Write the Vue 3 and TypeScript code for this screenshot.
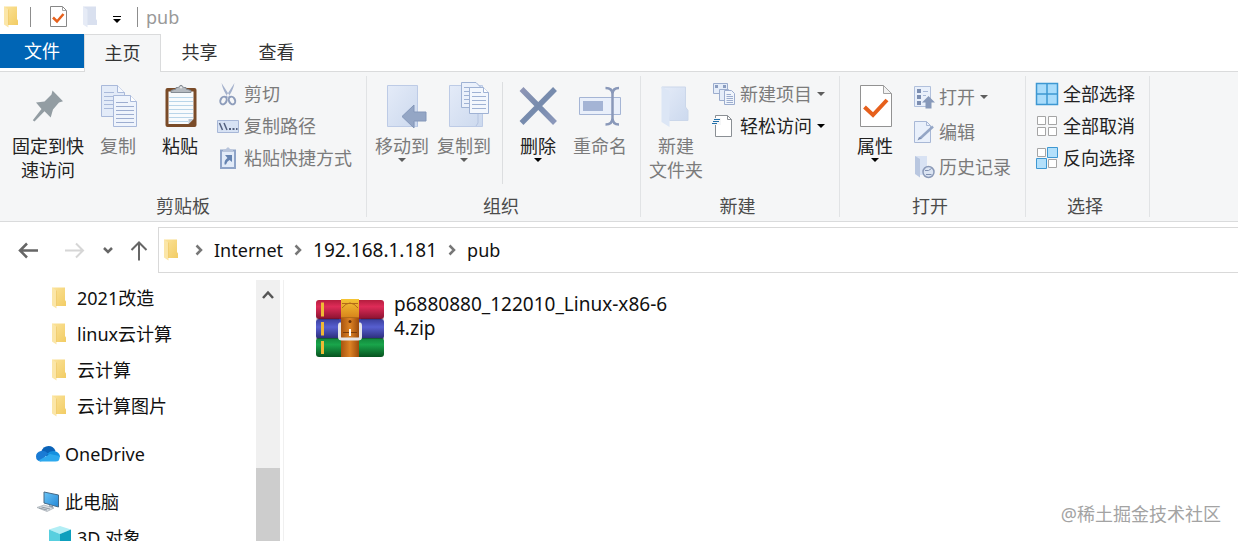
<script setup lang="ts">
interface LargeAction { icon: string; lines: string[]; disabled?: boolean; menu?: boolean; wide?: boolean; divider?: boolean }
interface SmallAction { icon: string; label: string; disabled?: boolean; menu?: boolean }
interface Group { title: string; large: LargeAction[]; small: SmallAction[]; roomy?: boolean }
interface Place { icon: string; label: string; level: number; spaced?: boolean }

const groups: Group[] = [
  {
    title: '剪贴板',
    large: [
      { icon: 'pin', lines: ['固定到快', '速访问'], wide: true },
      { icon: 'copy', lines: ['复制'], disabled: true },
      { icon: 'paste', lines: ['粘贴'] },
    ],
    small: [
      { icon: 'cut', label: '剪切', disabled: true },
      { icon: 'path', label: '复制路径', disabled: true },
      { icon: 'shortcut', label: '粘贴快捷方式', disabled: true },
    ],
  },
  {
    title: '组织',
    large: [
      { icon: 'move', lines: ['移动到'], disabled: true, menu: true },
      { icon: 'copyto', lines: ['复制到'], disabled: true, menu: true },
      { icon: 'delete', lines: ['删除'], menu: true, divider: true },
      { icon: 'rename', lines: ['重命名'], disabled: true },
    ],
    small: [],
  },
  {
    title: '新建',
    large: [{ icon: 'newfolder', lines: ['新建', '文件夹'], disabled: true }],
    small: [
      { icon: 'newitem', label: '新建项目', disabled: true, menu: true },
      { icon: 'easy', label: '轻松访问', menu: true },
    ],
  },
  {
    title: '打开',
    roomy: true,
    large: [{ icon: 'props', lines: ['属性'], menu: true }],
    small: [
      { icon: 'open', label: '打开', disabled: true, menu: true },
      { icon: 'edit', label: '编辑', disabled: true },
      { icon: 'history', label: '历史记录', disabled: true },
    ],
  },
  {
    title: '选择',
    large: [],
    small: [
      { icon: 'all', label: '全部选择' },
      { icon: 'none', label: '全部取消' },
      { icon: 'invert', label: '反向选择' },
    ],
  },
]

const places: Place[] = [
  { icon: 'folder', label: '2021改造', level: 2 },
  { icon: 'folder', label: 'linux云计算', level: 2 },
  { icon: 'folder', label: '云计算', level: 2 },
  { icon: 'folder', label: '云计算图片', level: 2 },
  { icon: 'onedrive', label: 'OneDrive', level: 1, spaced: true },
  { icon: 'pc', label: '此电脑', level: 1, spaced: true },
  { icon: 'cube', label: '3D 对象', level: 2 },
]

const crumbs: string[] = ['Internet', '192.168.1.181', 'pub']
const isAddress = (name: string): boolean => /^[\d.]+$/.test(name)
</script>

<template>
  <div class="window">
    <svg class="sprite" aria-hidden="true">
      <defs>
        <linearGradient id="g-folder" x1="0" y1="0" x2="1" y2="1"><stop offset="0" stop-color="#fbe39b" /><stop offset="1" stop-color="#f2cc63" /></linearGradient>
        <linearGradient id="g-pale" x1="0" y1="0" x2="1" y2="1"><stop offset="0" stop-color="#e4ebf8" /><stop offset="1" stop-color="#ccd9ee" /></linearGradient>
        <linearGradient id="g-x" x1="0" y1="0" x2="1" y2="1"><stop offset="0" stop-color="#8f96b6" /><stop offset=".5" stop-color="#768bad" /><stop offset="1" stop-color="#8c98bb" /></linearGradient>
        <linearGradient id="g-red" x1="0" y1="0" x2="0" y2="1"><stop offset="0" stop-color="#b51d3e" /><stop offset=".35" stop-color="#de2c58" /><stop offset="1" stop-color="#8a1230" /></linearGradient>
        <linearGradient id="g-blue" x1="0" y1="0" x2="0" y2="1"><stop offset="0" stop-color="#3a3f9c" /><stop offset=".4" stop-color="#575fd0" /><stop offset="1" stop-color="#2a2c77" /></linearGradient>
        <linearGradient id="g-green" x1="0" y1="0" x2="0" y2="1"><stop offset="0" stop-color="#12853a" /><stop offset=".35" stop-color="#19a54b" /><stop offset="1" stop-color="#07531f" /></linearGradient>
        <linearGradient id="g-belt" x1="0" y1="0" x2="1" y2="0"><stop offset="0" stop-color="#a85410" /><stop offset=".5" stop-color="#dd8324" /><stop offset="1" stop-color="#9b4a0c" /></linearGradient>
        <linearGradient id="g-gold" x1="0" y1="0" x2="0" y2="1"><stop offset="0" stop-color="#f5c535" /><stop offset="1" stop-color="#d9861c" /></linearGradient>
        <linearGradient id="g-screen" x1="0" y1="0" x2="1" y2="1"><stop offset="0" stop-color="#6cc5f6" /><stop offset="1" stop-color="#2387d6" /></linearGradient>

        <symbol id="i-pin" viewBox="0 0 48 48"><path fill="#939da3" d="M28.5 8.5 39 19.3 35 20.5 29 27.5 26.7 35.5 20.5 29.3 10.5 39.5 8.8 38.3 17.5 27 12 20.5 20.5 19.5 27.5 12.5Z" /></symbol>

        <symbol id="i-copy" viewBox="0 0 48 48">
          <g fill="#e3ebf8" stroke="#a9b9da"><path d="M7.500 3.500H23.500L30.500 10.500V34.500H7.500Z" /><path fill="#f5f8fd" d="M23.500 3.500V10.500H30.500" /><path d="M10 10.500H20M10 14.500H20M10 18.500H20M10 22.500H20M10 26.500H20" />
            <path fill="#eff4fc" d="M19.500 13.500H36.500L42.500 19.500V44.500H19.500Z" /><path fill="#fff" d="M36.500 13.500V19.500H42.500" /><path d="M22 20.500H34M22 24.500H40M22 28.500H40M22 32.500H40M22 36.500H40M22 40.500H40" stroke="#9dadd0" /></g>
        </symbol>

        <symbol id="i-paste" viewBox="0 0 48 48">
          <rect x="9.500" y="6" width="31" height="39" rx="2" fill="#7a4b28" /><path d="M12.500 9.500H37.500V37L32.500 42H12.500Z" fill="#f8fbfd" /><path d="M37.500 37H32.500V42Z" fill="#bcc8d3" />
          <path d="M13 15.500H37M13 19.500H37M13 23.500H37M13 27.500H37M13 31.500H37M13 35.500H37M13 39.500H32" stroke="#b9d5e9" />
          <path d="M15 10.500V8.500L20 7V5.500H22.500Q25 1 27.500 5.500H30V7L35 8.500V10.500Z" fill="#b5bac0" stroke="#858c94" /><circle cx="25" cy="5.500" r="1" fill="#eee" />
        </symbol>

        <symbol id="i-move" viewBox="0 0 48 48"><path fill="url(#g-pale)" stroke="#bdcbe6" d="M9.500 3.500H39.500V44.500H9.500Z" /><path d="M36 40V44.500M39.500 38V44.500" stroke="#afc0df" /><path fill="#94a6c5" stroke="#8497b9" d="M24 34.500 36 23V30H48V39H36V46Z" /></symbol>

        <symbol id="i-copyto" viewBox="0 0 48 48">
          <path fill="url(#g-pale)" stroke="#bdcbe6" d="M9.500 3.500H42.500V44.500H9.500Z" /><path d="M38 32V41L36 44" stroke="#b5c4e0" fill="none" />
          <g stroke="#9fb2d4" fill="#ebf1fb"><path d="M21.500.5H36L41.500 6V25.500H21.500Z" /><path d="M24 5.500H34M24 9.500H34M24 13.500H29M24 17.500H29M24 21.500H29" /><path fill="#f3f7fd" d="M29.500 5.500H43.500L48.500 10.500V31.500H29.500Z" /><path fill="#fff" d="M43.500 5.500V10.500H48.500" /><path d="M32 10.500H41M32 14.500H46M32 18.500H46M32 22.500H46M32 26.500H46" /></g>
        </symbol>

        <symbol id="i-delete" viewBox="0 0 48 48"><path d="M7.500 7 41 41M41 7 7.500 41" stroke="url(#g-x)" stroke-width="5.500" /></symbol>

        <symbol id="i-rename" viewBox="0 0 48 48"><path fill="#e9effa" stroke="#a5b5d5" d="M3.500 15.500H44.500V32.500H3.500Z" /><path fill="#a4b4d5" d="M7 19H27V29H7Z" /><path fill="none" stroke="#8998b9" stroke-width="2.500" d="M29.500 6Q36.500 6 36.500 12Q36.500 6 43 6M36.500 10V38M29.500 42.500Q36.500 42.500 36.500 36Q36.500 42.500 43 42.500" /></symbol>

        <symbol id="i-newfolder" viewBox="0 0 48 48"><path fill="url(#g-pale)" stroke="#cbd7ea" d="M10 5H33.500V25L36 28.500V38.500H17.500Z" /><path fill="#dce6f5" d="M9.500 4.500 17.500 9V45L9.500 40Z" /></symbol>

        <symbol id="i-props" viewBox="0 0 48 48"><path fill="#fff" stroke="#929292" d="M9.500 3.500H32.500L40.500 11.500V44.500H9.500Z" /><path fill="#f1f1f1" stroke="#a3a3a3" d="M32.500 3.500V11.500H40.500Z" /><path fill="none" stroke="#e6601c" stroke-width="4" d="M13.500 25 22 33 36 18" /></symbol>

        <symbol id="i-cut" viewBox="0 0 24 24"><path fill="#a4b1cc" d="M5.500 1 14.500 15 12.500 16Q7 9 5.500 1ZM18.500 1 9.500 15 11.500 16Q17 9 18.500 1Z" /><g fill="none" stroke="#8e9dbb" stroke-width="2"><ellipse cx="7.500" cy="18.500" rx="3" ry="4" transform="rotate(25 7.500 18.500)" /><ellipse cx="16" cy="18.500" rx="3" ry="4" transform="rotate(-25 16 18.500)" /></g></symbol>

        <symbol id="i-path" viewBox="0 0 24 24"><path fill="#d7e2f4" stroke="#a7b7d7" d="M1.500 6.500H22.500V18.500H1.500Z" /><path stroke="#53607e" stroke-width="1.500" d="M3.500 9 6.500 16M8 9 11 16" /><path fill="#53607e" d="M13 14H15V16H13ZM16.500 14H18.500V16H16.500ZM20 14H21.500V16H20Z" /></symbol>

        <symbol id="i-shortcut" viewBox="0 0 24 24"><path fill="#e2ebf8" stroke="#8fa4c8" stroke-width="2" d="M5 4.500H19V22H5Z" /><path fill="#b7c4db" d="M7 6V4L10 3Q12-.5 14 3L17 4V6Z" /><path fill="#6583b0" d="M9 9H16V16L13.500 14Q11 15 10 18.500H8.500Q8 14 11.500 12Z" /></symbol>

        <symbol id="i-newitem" viewBox="0 0 24 24"><g stroke="#9cadce" fill="#e5edf9"><path d="M1.500 1.500H15.500V11.500H1.500Z" /><path fill="#8b9dc0" stroke="none" d="M3 3H6V6H3ZM11 3H14V6H11Z" /><path d="M7.500 7.500H16.500V18.500H7.500Z" /><path fill="#f0f5fc" d="M12.500 8.500H19.500L22.500 11.500V22.500H12.500Z" /><path d="M14.500 12.500H19M14.500 14.500H21M14.500 16.500H21M14.500 18.500H21M14.500 20.500H21" /></g></symbol>

        <symbol id="i-easy" viewBox="0 0 24 24"><path fill="#fff" stroke="#8a8f94" d="M3.500 1.500H15.500L19.500 5.500V22.500H3.500Z" /><path fill="none" stroke="#8a8f94" d="M15.500 1.500V5.500H19.500" /><path d="M1 4H9V11H0V7Z" fill="#f5f6f7" /><path d="M2 5.500H8M1 7.500H7M0 9.500H5" stroke="#1f6ea8" /></symbol>

        <symbol id="i-open" viewBox="0 0 24 24"><path fill="#e9f0fb" stroke="#b1c0dc" d="M3.500 1.500H19.500V21.500H3.500Z" /><path fill="#7c8eb1" d="M6 4H10V8H6ZM6 10H10V14H6ZM6 16H10V20H6Z" /><path d="M12 6.500H17M12 10.500H15" stroke="#a8b9d8" /><path fill="#8799ba" d="M17.500 11 24 17.500H20.500V23.500H14.500V17.500H11Z" /></symbol>

        <symbol id="i-edit" viewBox="0 0 24 24"><path fill="#e9f0fb" stroke="#a8b8d6" d="M3.500 1.500H15.500L19.500 5.500V22.500H3.500Z" /><path fill="none" stroke="#a8b8d6" d="M15.500 1.500V5.500H19.500" /><path stroke="#94a6c6" stroke-width="2.500" d="M22 6.500 9 18.500" /><path fill="#7c8eb0" d="M10.500 18.500 8 17 6.500 20.500Z" /></symbol>

        <symbol id="i-history" viewBox="0 0 24 24"><path fill="#d8e2f3" d="M4 1H16V20H9L4 17Z" /><path fill="#b9c7e0" d="M4 1 9 4V22.500L4 19Z" /><circle cx="17.500" cy="17" r="5.500" fill="#dbe4f2" stroke="#8b9ab8" stroke-width="1.500" /><path d="M14 15.500H17.500L20.500 13.500M15 19.500H20.500" fill="none" stroke="#8090b0" /></symbol>

        <symbol id="i-all" viewBox="0 0 24 24"><path fill="#a9dcfb" stroke="#3e98d2" stroke-width="1.500" d="M1.500 1.500H22.500V22.500H1.500ZM12 2V22M2 12H22" /></symbol>
        <symbol id="i-none" viewBox="0 0 24 24"><path fill="#fff" stroke="#a5a5a5" d="M2.500 2.500H10.500V10.500H2.500ZM13.500 2.500H21.500V10.500H13.500ZM2.500 13.500H10.500V21.500H2.500ZM13.500 13.500H21.500V21.500H13.500Z" /></symbol>
        <symbol id="i-invert" viewBox="0 0 24 24"><path fill="#fff" stroke="#a5a5a5" d="M2.500 2.500H10.500V10.500H2.500ZM13.500 13.500H21.500V21.500H13.500Z" /><path fill="#b3e0fb" stroke="#3e98d2" d="M12.500 1.500H22.500V11.500H12.500ZM1.500 12.500H11.500V22.500H1.500Z" /></symbol>

        <symbol id="i-folder" viewBox="1 0 24 24"><path fill="url(#g-folder)" d="M5 1.500H18V14L19 15.500V20H9Z" /><path fill="#fbe6a8" d="M5 1.500 9.500 4.500V22.500L5 19.500Z" /><path fill="#e9bd51" d="M9.500 4.500H10V20H9.500Z" /></symbol>
        <symbol id="i-palefolder" viewBox="1 0 24 24"><path fill="#d9e0ef" d="M5 1.500H18V14L19 15.500V20H9Z" /><path fill="#e6ebf6" d="M5 1.500 9.500 4.500V22.500L5 19.500Z" /></symbol>
        <symbol id="i-check" viewBox="0 0 24 24"><path fill="#fff" stroke="#878787" d="M3.500 1.500H15.500L19.500 5.500V21.500H3.500Z" /><path fill="none" stroke="#a0a0a0" d="M15.500 1.500V5.500H19.500" /><path fill="none" stroke="#e6601c" stroke-width="2.500" d="M6 12.500 10 16.500 16.500 9" /></symbol>

        <symbol id="i-onedrive" viewBox="0 0 24 24"><path fill="#0a63b8" d="M5 10Q7 4 12.500 4Q17.500 4 19.500 9L13 16Z" /><path fill="#1a7bd4" d="M5 9Q9 8 12 11.500L5 19.500Q0 19 0 14.500Q0 10 5 9Z" /><path fill="#1490df" d="M11 12Q15 7.500 20 9.500Q24 11 24 15L19 17Z" /><path fill="#2da9ee" d="M2.500 18.500 14 12 23.500 14Q24.500 19.500 19.500 19.500H5Q3.500 19.500 2.500 18.500Z" /></symbol>
        <symbol id="i-pc" viewBox="0 0 24 24"><path fill="url(#g-screen)" stroke="#476985" d="M8 2 22.500 5V17L8 13Z" /><path fill="#8b9ba8" d="M13 15 17 16V19L13 18Z" /><path fill="#d8dde2" stroke="#a3abb2" stroke-width=".7" d="M1 17.500 8 15 18 18 11 21.500Z" /><path d="M3 18 11 20M5.500 17 14 19" stroke="#929ca5" /></symbol>
        <symbol id="i-cube" viewBox="0 0 24 24"><path fill="#b2eef5" d="M12 0 23 3.500 12 8 1 3.500Z" /><path fill="#58cfdf" d="M1 3.500 12 8V24L1 20Z" /><path fill="#0d9fbd" d="M23 3.500 12 8V24L23 20Z" /></symbol>

        <symbol id="i-rar" viewBox="0 0 72 64">
          <rect x="2" y="3" width="68" height="19" rx="3" fill="url(#g-red)" /><rect x="2" y="22" width="68" height="20" rx="3" fill="url(#g-blue)" /><rect x="2" y="41" width="68" height="19" rx="3" fill="url(#g-green)" />
          <path d="M7 5.500H10V19.500H7ZM7 25H10V38.500H7ZM7 44H10V57H7Z" fill="#eeb936" />
          <path fill="url(#g-belt)" d="M27 3H45V60H27Z" /><path fill="url(#g-gold)" d="M27 2H45V20H27Z" /><path d="M28 6.500H44M28 11Q36 1 44 11M27 20.500H45" stroke="#b26a18" fill="none" />
          <circle cx="36" cy="24.500" r="1.500" fill="#683009" /><path d="M27 27H26Q25.500 27 25.500 29V40Q25.500 42 28 42H44Q46.500 42 46.500 40V29Q46.500 27 46 27H45" fill="none" stroke="#e5e5e8" stroke-width="3" /><path d="M29 35.500H43" stroke="#7a3c0b" /><path d="M36 32V39" stroke="#fff" stroke-width="2" /><path d="M2 22H25M47 22H70M2 41.500H24M48 41.500H70" stroke="#160f25" stroke-opacity=".35" />
        </symbol>

        <symbol id="i-back" viewBox="0 0 24 24"><path d="M22 12.500H4M11 5.500 4 12.500 11 19.500" fill="none" stroke="currentColor" stroke-width="2.500" /></symbol>
        <symbol id="i-forward" viewBox="0 0 24 24"><path d="M3 12.500H21M14 5.500 21 12.500 14 19.500" fill="none" stroke="currentColor" stroke-width="2" /></symbol>
        <symbol id="i-up" viewBox="0 0 24 24"><path d="M12 22.500V4.500M4.500 12 12 4.500 19.500 12" fill="none" stroke="currentColor" stroke-width="2" /></symbol>
        <symbol id="i-down" viewBox="0 0 12 12"><path d="M2 4 6 8 10 4" fill="none" stroke="currentColor" stroke-width="2.500" /></symbol>
        <symbol id="i-right" viewBox="0 0 12 12"><path d="M3.500 1.500 8 6 3.500 10.500" fill="none" stroke="currentColor" stroke-width="2.500" /></symbol>
        <symbol id="i-scroll" viewBox="0 0 12 12"><path d="M1 9 6 3.500 11 9" fill="none" stroke="currentColor" stroke-width="2.500" /></symbol>
        <symbol id="i-caret" viewBox="0 0 8 4"><path d="M0 0H8L4 4Z" fill="currentColor" /></symbol>
      </defs>
    </svg>

    <header class="titlebar">
      <svg class="small-icon"><use href="#i-folder" /></svg>
      <span class="bar"></span>
      <button class="plain" aria-label="属性"><svg class="small-icon"><use href="#i-check" /></svg></button>
      <button class="plain" aria-label="新建文件夹"><svg class="small-icon"><use href="#i-palefolder" /></svg></button>
      <button class="plain quick-menu" aria-label="自定义快速访问工具栏"><svg class="caret"><use href="#i-caret" /></svg></button>
      <span class="bar"></span>
      <span class="title">pub</span>
    </header>

    <nav class="tabs" role="tablist">
      <button class="tab file" role="tab">文件</button>
      <button class="tab active" role="tab" aria-selected="true">主页</button>
      <button class="tab" role="tab">共享</button>
      <button class="tab" role="tab">查看</button>
    </nav>

    <section class="ribbon">
      <div v-for="group in groups" :key="group.title" class="group" :class="{ roomy: group.roomy }">
        <div class="actions">
          <template v-for="action in group.large" :key="action.icon">
            <span v-if="action.divider" class="divider"></span>
            <button class="large" :class="{ wide: action.wide }" :disabled="action.disabled">
              <svg class="large-icon"><use :href="`#i-${action.icon}`" /></svg>
              <span v-for="line in action.lines" :key="line" class="line">{{ line }}</span>
              <svg v-if="action.menu" class="caret"><use href="#i-caret" /></svg>
            </button>
          </template>
          <div v-if="group.small.length" class="list">
            <button v-for="action in group.small" :key="action.icon" class="small" :disabled="action.disabled">
              <svg class="small-icon"><use :href="`#i-${action.icon}`" /></svg>
              <span>{{ action.label }}</span>
              <svg v-if="action.menu" class="caret"><use href="#i-caret" /></svg>
            </button>
          </div>
        </div>
        <div class="group-title">{{ group.title }}</div>
      </div>
    </section>

    <div class="navbar">
      <div class="history">
        <button class="plain strong" aria-label="后退"><svg class="small-icon"><use href="#i-back" /></svg></button>
        <button class="plain faint" aria-label="前进" disabled><svg class="small-icon"><use href="#i-forward" /></svg></button>
        <button class="plain strong recent" aria-label="最近位置"><svg class="chevron"><use href="#i-down" /></svg></button>
        <button class="plain strong" aria-label="上移"><svg class="small-icon"><use href="#i-up" /></svg></button>
      </div>
      <div class="address">
        <svg class="small-icon"><use href="#i-folder" /></svg>
        <template v-for="crumb in crumbs" :key="crumb">
          <svg class="chevron"><use href="#i-right" /></svg>
          <a href="#" class="crumb" :class="{ numeric: isAddress(crumb) }">{{ crumb }}</a>
        </template>
      </div>
    </div>

    <div class="body">
      <aside class="tree">
        <a v-for="place in places" :key="place.label" href="#" class="place" :class="[`level-${place.level}`, { spaced: place.spaced }]">
          <svg class="small-icon"><use :href="`#i-${place.icon}`" /></svg>
          <span>{{ place.label }}</span>
        </a>
      </aside>
      <div class="scrollbar">
        <button class="plain scroll-up" aria-label="向上滚动"><svg class="chevron"><use href="#i-scroll" /></svg></button>
        <div class="thumb"></div>
      </div>
      <main class="files">
        <button class="file-item">
          <svg class="file-icon"><use href="#i-rar" /></svg>
          <span class="file-name">p6880880_122010_Linux-x86-64.zip</span>
        </button>
      </main>
    </div>
    <div class="watermark">@稀土掘金技术社区</div>
  </div>
</template>

<style>
body { margin: 0; }
</style>

<style scoped>
.window {
  position: relative;
  display: flex;
  flex-direction: column;
  height: 100vh;
  overflow: hidden;
  background: #fff;
  color: #111;
  font: 18px/24px "Noto Sans", "Noto Sans CJK SC", sans-serif;
}
.sprite { position: absolute; width: 0; height: 0; }
svg { display: block; flex: none; overflow: visible; }
symbol { overflow: visible; }
button { margin: 0; padding: 0; border: 0; background: none; color: inherit; font: inherit; }
a { color: inherit; text-decoration: none; }
.small-icon { width: 24px; height: 24px; }
.large-icon { width: 48px; height: 48px; margin-bottom: 4px; }
.caret { width: 8px; height: 4px; }
.chevron { width: 12px; height: 12px; }
.plain { display: flex; flex: none; align-items: center; justify-content: center; }

.titlebar { display: flex; flex: none; align-items: center; height: 34px; }
.bar { width: 1px; height: 20px; margin: 0 16px 0 6px; background: #8d8d8d; }
.titlebar .plain { margin-right: 8px; }
.titlebar .quick-menu { width: 16px; height: 24px; margin: 0 6px 0 -2px; position: relative; padding-top: 8px; box-sizing: border-box; color: #000; }
.quick-menu::before { content: ""; position: absolute; top: 11px; left: 4px; width: 8px; height: 1px; background: #000; }
.bar + .title { margin-left: -8px; color: #999; }

.tabs { display: flex; flex: none; height: 38px; box-shadow: inset 0 -1px #dadbdc; }
.tab { min-width: 77px; height: 38px; box-sizing: border-box; padding: 0 16px 2px; color: #333; }
.tab.file { min-width: 84px; height: 34px; padding-bottom: 0; background: #0065b5; color: #fff; }
.tab.active { border: 1px solid #dadbdc; border-bottom: 0; background: #f5f6f7; }

.ribbon { display: flex; flex: none; overflow: hidden; border-bottom: 1px solid #dadbdc; background: #f5f6f7; }
.group { position: relative; display: flex; flex: none; flex-direction: column; padding: 0 10px 3px 4px; }
.group:first-child { padding-left: 9px; }
.group::after { content: ""; position: absolute; top: 4px; right: 0; bottom: 4px; width: 1px; background: #e1e3e5; }
.actions { display: flex; flex: 1; padding-bottom: 10px; }
.large { display: flex; flex-direction: column; align-items: center; width: 62px; padding-top: 10px; color: #222; white-space: nowrap; }
.large.wide { width: 78px; }
.large:disabled, .small:disabled { color: #7b7b7b; }
.large:disabled .caret, .small:disabled .caret { color: #5e5e5e; }
.large:enabled .caret, .small:enabled .caret { color: #000; }
.divider { width: 1px; margin: 10px 4px 0 7px; background: #dcdee0; }
.list { display: flex; flex-direction: column; padding: 6px 5px 0; }
.small { display: flex; align-items: center; gap: 4px; height: 32px; color: #222; white-space: nowrap; }
.small .caret { margin-left: 1px; }
.roomy .list { padding-top: 7px; }
.roomy .small { height: 35px; }
.group-title { color: #4b4b4b; text-align: center; }

.navbar { display: flex; flex: none; padding: 5px 0 7px; }
.history { display: flex; align-items: center; width: 142px; padding-left: 16px; }
.history .plain { width: 24px; height: 24px; margin-right: 22px; }
.history .faint { margin-right: 0; }
.history .recent { width: 12px; margin: 0 13px 0 16px; }
.strong { color: #666; }
.faint { color: #d6d6d6; }
.address { display: flex; flex: 1; align-items: center; gap: 9px; height: 44px; padding-left: 1px; border: 1px solid #d9d9d9; border-right: 0; }
.address .chevron { color: #777; }
.numeric { font-size: 19px; }

.body { display: flex; flex: 1; min-height: 0; }
.tree { width: 256px; overflow: hidden; }
.place { display: flex; align-items: center; height: 36px; gap: 5px; white-space: nowrap; }
.level-1 { padding-left: 36px; }
.level-2 { padding-left: 48px; }
.spaced { margin-top: 12px; }
.scrollbar { display: flex; flex-direction: column; width: 24px; margin-right: 3px; background: #f0f0f0; }
.scroll-up { height: 30px; color: #555; }
.thumb { height: 28%; margin-top: auto; background: #cdcdcd; }
.files { flex: 1; padding: 12px 30px; border-left: 1px solid #f0f0f0; }
.file-item { display: flex; align-items: flex-start; gap: 8px; width: 364px; text-align: left; }
.file-icon { width: 72px; height: 64px; margin-top: 5px; }
.file-name { font-size: 19px; word-break: break-all; }
.watermark { position: absolute; right: 17px; bottom: 15px; color: #a3a3a3; text-shadow: 1px 1px 1px #fff; }
</style>
